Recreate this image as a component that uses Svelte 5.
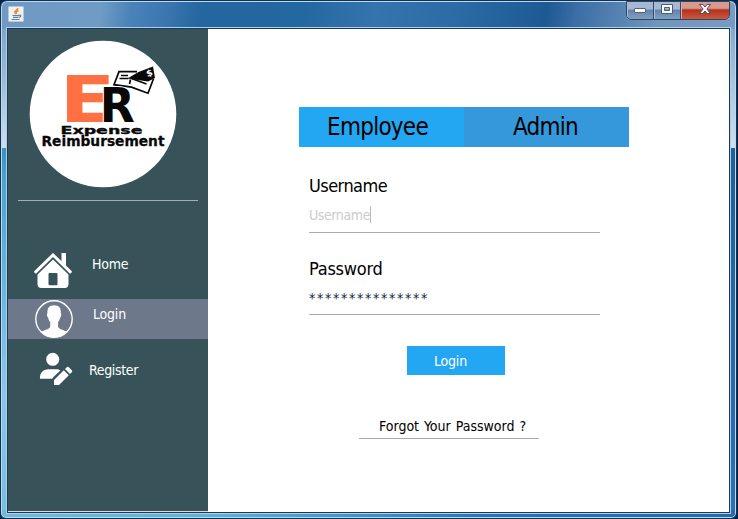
<script>
  let username = $state('Username');
  let active = $state('Login');
</script>

<div class="window">
  <header>
    <svg class="java" width="16" height="16" viewBox="0 0 16 16">
      <rect x=".5" y=".5" width="15" height="15" rx="1" fill="#eef0f2" stroke="#b9c6d4" />
      <path d="M9.800 2C10 4 5.800 4.800 6.800 6.500L7.800 8.200M10.500 4.500C8.500 5 7.500 6 8.800 7.800" fill="none" stroke="#ee8a24" stroke-width="1.400" />
      <path d="M4.500 9.500h6.500M5 11.300h5.500M3.500 13.500h8M11 9.300c2.500-.6 2.500 1.500 0 2" fill="none" stroke="#5d7f9f" stroke-width="1.200" />
    </svg>
    <div class="controls">
      <button aria-label="Minimize">
        <svg width="14" height="12" viewBox="0 0 14 12"><rect x="1.500" y="5.500" width="11" height="4" rx=".5" fill="#fff" stroke="#53617a" /></svg>
      </button>
      <button aria-label="Maximize">
        <svg width="14" height="12" viewBox="0 0 14 12"><path d="M1.500 1.500h11v9h-11zM4.500 4.500v3h5v-3z" fill="#f8f8f8" fill-rule="evenodd" stroke="#4b5c77" /></svg>
      </button>
      <button class="close" aria-label="Close">
        <svg width="14" height="12" viewBox="0 0 14 12"><path d="M1.500 1.500h3.300L7 4l2.200-2.500h3.300L8.900 6l3.600 4.500H9.200L7 8l-2.200 2.500H1.500L5.100 6z" fill="#fff" stroke="#5b4658" /></svg>
      </button>
    </div>
  </header>
  <div class="body">
    <aside>
      <svg class="logo" width="148" height="148" viewBox="0 0 148 148">
        <circle cx="74" cy="74" r="73.300" fill="#fff" />
        <text transform="translate(30.500 82.300) scale(1.290 1)" font-size="63.500" class="mark" fill="#ff7043">E</text>
        <g transform="translate(-29 -40)">
          <path d="M118.500 72.200h17l20 5-7.500 17-16.500-6-17.500-2.500z" fill="#fff" />
          <path d="M137 71.700h-18L114 84.700l17.500 2.500 16.500 6 5.500-14.500M130.500 79.500l-1 4.500M131.500 78.500l15 5.500M121 75.500h7M119.500 78.500h9" fill="none" stroke="#080808" stroke-width="1.700" />
          <path d="M127.500 78.500l11-6.500 14.500-5.500 2 11.500-7 3.500z" fill="#080808" />
          <text transform="translate(147.500 77) rotate(-20)" font-size="9" class="mark" fill="#fff">$</text>
        </g>
        <text transform="translate(70.800 82.300) scale(.960 1)" font-size="47.500" class="mark r" fill="#080808">R</text>
        <text x="31.500" y="94" font-size="9.600" textLength="82" lengthAdjust="spacingAndGlyphs" class="name">Expense</text>
        <text x="12.500" y="105.700" font-size="14.200" textLength="123" lengthAdjust="spacingAndGlyphs" class="name">Reimbursement</text>
      </svg>
      <div class="rule"></div>
      <nav>
        <button class="home" class:on={active === 'Home'} onclick={() => (active = 'Home')}>
          <svg width="38" height="36" viewBox="0 0 38 36">
            <path d="M27.500 .5q0-.5.500-.5h3.500q.5 0 .5.500V14l-4.500-4.500z" fill="#fff" />
            <path d="M1.700 18.800L19 2l17.300 16.800" fill="none" stroke="#fff" stroke-width="3" stroke-linecap="round" />
            <path d="M19 6.500L34.500 21.500V31q0 4-4 4h-23q-4 0-4-4v-9.500zM15.500 20q-1 0-1 1v10q0 1.200 1 1.200h7q1 0 1-1.200V21q0-1-1-1z" fill="#fff" fill-rule="evenodd" />
          </svg>
          <span>Home</span>
        </button>
        <button class="login" class:on={active === 'Login'} onclick={() => (active = 'Login')}>
          <svg width="38" height="38" viewBox="0 0 38 38">
            <circle cx="19" cy="19" r="18.200" fill="none" stroke="#fff" stroke-width="1.400" />
            <path d="M19 5.300c4.800 0 7.300 2.700 6.800 7.700.8.300.7 3.600-.6 4.500-.4 2-1.200 3.500-2.100 4.600v4.400c.5 2.600 5.700 3.600 9.500 5.500C29 35.700 24.500 37.500 19 37.500S9 35.700 5.700 32c3.800-1.900 9-2.900 9.500-5.500v-4.400c-.9-1.100-1.700-2.600-2.100-4.600-1.300-.9-1.400-4.200-.6-4.500-.5-5 2-7.700 6.500-7.700z" fill="#fff" />
          </svg>
          <span>Login</span>
        </button>
        <button class="register" class:on={active === 'Register'} onclick={() => (active = 'Register')}>
          <svg width="34" height="34" viewBox="0 0 34 34">
            <circle cx="13.700" cy="7.300" r="6.500" fill="#fff" />
            <path d="M1 26.700c-.5-5.500 3-9.500 8.500-9.500h7.300c2 0 3.400.4 4.600 1.200L14.500 25q-1 1-1.300 1.700z" fill="#fff" />
            <path d="M15 33v-5l9.800-9.800 5 5L20 33zM26 17l1.800-1.800q1-1 2 0l3 3q1 1 0 2L31 22z" fill="#fff" />
          </svg>
          <span>Register</span>
        </button>
      </nav>
    </aside>
    <main>
      <div class="tabs">
        <button>Employee</button>
        <button>Admin</button>
      </div>
      <form onsubmit={(e) => e.preventDefault()}>
        <label for="user">Username</label>
        <div class="field" id="user"><span class="hint">{username}</span><i class="caret"></i></div>
        <label for="pass" class="second">Password</label>
        <div class="field pass" id="pass">***************</div>
        <button class="submit">Login</button>
      </form>
      <div class="forgot">Forgot Your Password ?</div>
    </main>
  </div>
</div>

<style>
  :global(body) { margin: 0; background: #06204a; overflow: hidden; }
  * { box-sizing: border-box; }
  button { font: inherit; border: 0; padding: 0; margin: 0; color: inherit; background: none; text-align: left; }
  svg { display: block; flex: none; }
  .window {
    width: 737px; height: 519px; padding: 0 6px 6px 6px;
    border: 1px solid #15314f; border-radius: 7px 7px 6px 6px;
    box-shadow: inset 0 0 0 1px #b8dcef;
    background:
      linear-gradient(100deg, #7199c2 0, #6f9bc5 100px, #4a83b8 130px, #3b76b0 165px, #24669f 200px, #2468a1 300px, #3574ad 370px, #2c6ba5 450px, #1d5a94 540px, #3c6fa5 570px, #7095bd 650px, #799bc1 100%) 0 0 / 100% 28px no-repeat,
      linear-gradient(180deg, #7499c0, #a9c4de 80px, #cfdfec 147px) 100% 0 / 8px 147px no-repeat,
      linear-gradient(180deg, #7199c2, #9dbbd6 80px, #cfe0ec 147px) 0 0 / 8px 147px no-repeat,
      linear-gradient(90deg, #71b9dc, #5eb2d9 210px, #2b70b5 500px, #2868ac) 0 100% / 100% 8px no-repeat,
      linear-gradient(180deg, #3c8fc0 147px, #4aa4d0 180px, #8cc5e9 390px, #76bedf) 0 0 / 8px 100% no-repeat,
      linear-gradient(180deg, #205f9c 150px, #2b70b5);
    font-family: "DejaVu Sans Condensed", "DejaVu Sans", sans-serif; font-stretch: condensed;
    font-size: 14px;
    line-height: 18px;
  }
  header { height: 27px; display: flex; justify-content: space-between; align-items: flex-start; }
  .java { margin: 5px 0 0 1px; }
  .controls { display: flex; height: 19px; width: 104px; border: 1px solid #c5d4e4; outline: 1px solid #31455e; outline-offset: -1px; border-top: 0; border-radius: 0 0 5px 5px; overflow: hidden; }
  .controls button { width: 27px; display: flex; justify-content: center; padding-top: 2px; border-right: 1px solid #334c6b; box-shadow: inset 1px 0 #a9bfd7; background: linear-gradient(#a5b9d2 0 45%, #6382aa 50%, #7fa0c2); }
  .controls .close { flex: 1; border: 0; background: linear-gradient(#d69a8e 0 40%, #b5301c 50%, #cb5a3d); box-shadow: inset 1px 0 #e0ada3; }
  .body { height: 485px; display: flex; border: 1px solid #173b58; box-shadow: 0 0 0 1px #aecfe5; background: #fff; }
  aside { width: 200px; background: #375359; color: #fff; flex: none; border-bottom: 1px solid #d4dde0; }
  .logo { margin: 11px 0 0 21px; }
  .mark { font-family: "DejaVu Sans", sans-serif; font-weight: bold; font-stretch: normal; }
  .r { stroke: #fff; stroke-width: 2px; paint-order: stroke; }
  .name { font-family: "DejaVu Sans", sans-serif; font-weight: bold; font-stretch: normal; fill: #080808; stroke: #080808; stroke-width: .3px; }
  .rule { height: 1px; width: 180px; margin: 12px 0 0 10px; background: #a7aab8; }
  nav { padding-top: 41px; display: flex; flex-direction: column; }
  nav button { width: 200px; display: flex; align-items: flex-start; }
  nav .on { background: #6d788a; }
  .home { height: 57px; padding: 11px 0 0 26px; }
  .home span { margin: 2px 0 0 20px; letter-spacing: -.2px; }
  .login { height: 40px; padding: 1px 0 0 27px; }
  .login span { margin: 5px 0 0 20px; letter-spacing: -.2px; }
  .register { height: 60px; padding: 13px 0 0 31px; }
  .register span { margin: 9px 0 0 16px; letter-spacing: -.35px; }
  main { flex: 1; padding: 78px 0 0 91px; color: #000; }
  .tabs { width: 330px; height: 40px; display: flex; font-size: 24px; line-height: 38px; }
  .tabs button { width: 165px; padding-left: 28px; background: #24a7f2; letter-spacing: -.75px; }
  .tabs button + button { background: #3598db; padding-left: 49px; }
  form { width: 291px; margin-left: 10px; display: flex; flex-direction: column; }
  label { font-size: 18px; line-height: 22px; margin-top: 28px; letter-spacing: -.55px; }
  label.second { margin-top: 25px; letter-spacing: -.25px; }
  .field { display: flex; height: 36px; padding-top: 9px; border-bottom: 1px solid #a7a9b5; }
  .hint { color: #ccc; letter-spacing: -.4px; }
  .caret { width: 1px; height: 17px; background: #bbb; }
  .pass { height: 35px; color: #102448; letter-spacing: 1.700px; }
  .submit { width: 98px; height: 29px; margin: 31px 0 0 98px; padding-left: 27px; background: #24a7f2; color: #fff; letter-spacing: -.2px; }
  .forgot { width: 180px; height: 22px; margin: 42px 0 0 60px; padding-left: 20px; border-bottom: 1px solid #a9a7b8; white-space: nowrap; word-spacing: 1px; }
</style>
